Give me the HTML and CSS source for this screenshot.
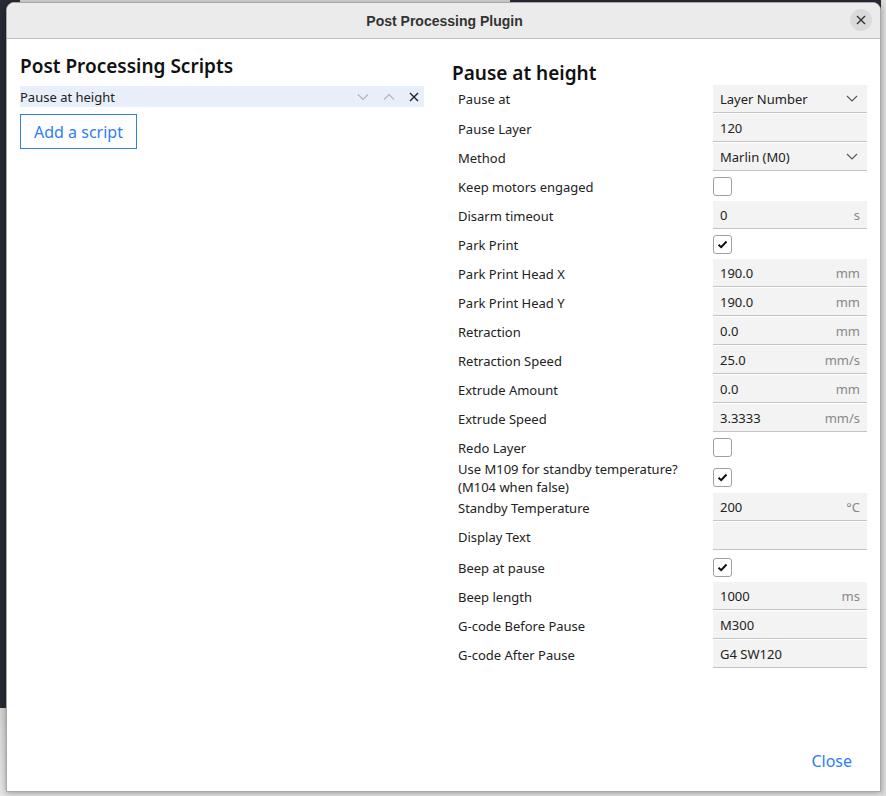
FILE: index.html
```html
<!DOCTYPE html>
<html>
<head>
<meta charset="utf-8">
<link rel="stylesheet" href="styles.css">
</head>
<body>
<div class="backdrop">
  <div class="dialog">
    <div class="titlebar">
      <span class="title">Post Processing Plugin</span>
      <span class="winclose"><svg width="10" height="10" viewBox="0 0 10 10"><path d="M1 1L9 9M9 1L1 9" stroke="#333" stroke-width="1.4" fill="none"/></svg></span>
    </div>
    <div class="content">
      <div class="left">
        <h2 class="heading">Post Processing Scripts</h2>
        <div class="script-item">
          <span class="script-name">Pause at height</span>
          <span class="item-icons">
            <svg class="ic" width="12" height="8" viewBox="0 0 12 8"><path d="M1 1.5L6 6.5L11 1.5" stroke="#b4b4b4" stroke-width="1.1" fill="none"/></svg>
            <svg class="ic" width="12" height="8" viewBox="0 0 12 8"><path d="M1 6.5L6 1.5L11 6.5" stroke="#b4b4b4" stroke-width="1.1" fill="none"/></svg>
            <svg class="ic" width="10" height="10" viewBox="0 0 10 10"><path d="M1 1L9 9M9 1L1 9" stroke="#222" stroke-width="1.4" fill="none"/></svg>
          </span>
        </div>
        <button class="add-btn">Add a script</button>
      </div>
      <div class="right">
        <h2 class="heading sub">Pause at height</h2>
        <div class="settings">
          <div class="row first"><span class="lbl">Pause at</span><div class="box combo"><span>Layer Number</span><svg width="12" height="7" viewBox="0 0 12 7"><path d="M1 1L6 6L11 1" stroke="#555" stroke-width="1.1" fill="none"/></svg></div></div>
          <div class="row"><span class="lbl">Pause Layer</span><div class="box"><span>120</span></div></div>
          <div class="row"><span class="lbl">Method</span><div class="box combo"><span>Marlin (M0)</span><svg width="12" height="7" viewBox="0 0 12 7"><path d="M1 1L6 6L11 1" stroke="#555" stroke-width="1.1" fill="none"/></svg></div></div>
          <div class="row"><span class="lbl">Keep motors engaged</span><div class="cbwrap"><span class="cb"></span></div></div>
          <div class="row"><span class="lbl">Disarm timeout</span><div class="box"><span>0</span><span class="unit">s</span></div></div>
          <div class="row"><span class="lbl">Park Print</span><div class="cbwrap"><span class="cb"><svg width="11" height="9" viewBox="0 0 11 9"><path d="M1.5 4.8L4.2 7.2L9.5 1.5" stroke="#111" stroke-width="2" fill="none"/></svg></span></div></div>
          <div class="row"><span class="lbl">Park Print Head X</span><div class="box"><span>190.0</span><span class="unit">mm</span></div></div>
          <div class="row"><span class="lbl">Park Print Head Y</span><div class="box"><span>190.0</span><span class="unit">mm</span></div></div>
          <div class="row"><span class="lbl">Retraction</span><div class="box"><span>0.0</span><span class="unit">mm</span></div></div>
          <div class="row"><span class="lbl">Retraction Speed</span><div class="box"><span>25.0</span><span class="unit">mm/s</span></div></div>
          <div class="row"><span class="lbl">Extrude Amount</span><div class="box"><span>0.0</span><span class="unit">mm</span></div></div>
          <div class="row"><span class="lbl">Extrude Speed</span><div class="box"><span>3.3333</span><span class="unit">mm/s</span></div></div>
          <div class="row"><span class="lbl">Redo Layer</span><div class="cbwrap"><span class="cb"></span></div></div>
          <div class="row tall"><span class="lbl">Use M109 for standby temperature?<br>(M104 when false)</span><div class="cbwrap"><span class="cb"><svg width="11" height="9" viewBox="0 0 11 9"><path d="M1.5 4.8L4.2 7.2L9.5 1.5" stroke="#111" stroke-width="2" fill="none"/></svg></span></div></div>
          <div class="row"><span class="lbl">Standby Temperature</span><div class="box"><span>200</span><span class="unit">°C</span></div></div>
          <div class="row textrow"><span class="lbl">Display Text</span><div class="box"><span></span></div></div>
          <div class="row"><span class="lbl">Beep at pause</span><div class="cbwrap"><span class="cb"><svg width="11" height="9" viewBox="0 0 11 9"><path d="M1.5 4.8L4.2 7.2L9.5 1.5" stroke="#111" stroke-width="2" fill="none"/></svg></span></div></div>
          <div class="row"><span class="lbl">Beep length</span><div class="box"><span>1000</span><span class="unit">ms</span></div></div>
          <div class="row"><span class="lbl">G-code Before Pause</span><div class="box"><span>M300</span></div></div>
          <div class="row"><span class="lbl">G-code After Pause</span><div class="box"><span>G4 SW120</span></div></div>
        </div>
      </div>
    </div>
    <div class="footer">
      <span class="close-link">Close</span>
    </div>
  </div>
</div>
</body>
</html>
```

FILE: styles.css
```css
* { box-sizing: border-box; }
html, body { margin: 0; padding: 0; }
body {
  width: 886px;
  height: 796px;
  overflow: hidden;
  font-family: "Noto Sans", "DejaVu Sans", sans-serif;
  background:
    linear-gradient(to right, transparent 0, transparent 881px, #dcdcdc 881px),
    linear-gradient(to right, transparent 0, transparent 20px, #d9d9d9 20px, #d9d9d9 510px, transparent 510px) top left / 886px 2px no-repeat,
    linear-gradient(to bottom, #272b33 0, #272b33 708px, #d2d2d2 708px, #e6e6e6 796px);
}
.backdrop {
  padding: 2px 5px 0 6px;
  height: 796px;
}
.dialog {
  width: 875px;
  height: 790px;
  background: #fff;
  border: 1px solid #a8a8a8;
  border-radius: 8px 8px 0 0;
  box-shadow: 0 1px 6px rgba(0,0,0,0.35);
  display: flex;
  flex-direction: column;
  overflow: hidden;
}
.titlebar {
  height: 36px;
  flex: none;
  background: #ebebeb;
  border-bottom: 1px solid #bfbfbf;
  display: flex;
  align-items: center;
  justify-content: center;
  position: relative;
}
.title {
  font-family: "Liberation Sans", sans-serif;
  font-weight: bold;
  font-size: 14px;
  color: #333;
  margin-left: 2px;
}
.winclose {
  position: absolute;
  right: 8px;
  top: 6px;
  width: 22px;
  height: 22px;
  border-radius: 50%;
  background: #dadada;
  display: flex;
  align-items: center;
  justify-content: center;
}
.content {
  flex: 1;
  display: flex;
  padding: 13px 13px 0 13px;
}
.left {
  width: 404px;
  flex: none;
}
.heading {
  margin: 0;
  font-size: 19px;
  font-weight: 600;
  color: #111;
  line-height: 28px;
  height: 28px;
}
.script-item {
  margin-top: 6px;
  height: 21px;
  background: #e8effb;
  display: flex;
  align-items: center;
  justify-content: space-between;
  font-size: 13px;
  color: #222;
}
.item-icons {
  display: flex;
  align-items: center;
  gap: 14px;
  padding-right: 5px;
}
.ic { display: block; }
.add-btn {
  margin-top: 7px;
  width: 117px;
  height: 35px;
  border: 1px solid #2f7cf6;
  background: #fff;
  color: #2f7cf6;
  font-family: "Noto Sans", sans-serif;
  font-size: 16px;
  padding: 0;
}
.right {
  margin-left: 28px;
  flex: 1;
}
.heading.sub {
  margin-top: 9px;
  height: 24px;
  line-height: 25px;
  font-size: 19px;
}
.settings {
  padding-left: 6px;
}
.row {
  height: 29px;
  display: flex;
  align-items: center;
  justify-content: space-between;
  font-size: 13px;
  color: #222;
}
.row.tall {
  height: 31px;
}
.row.textrow {
  height: 31px;
}
.lbl {
  line-height: 18px;
}
.row.first .lbl {
  margin-bottom: 1px;
}
.row.textrow .lbl {
  margin-bottom: 2px;
}
.box {
  width: 154px;
  height: 28px;
  align-self: flex-start;
  background: #f3f3f3;
  border-bottom: 1px solid #c4c4c4;
  display: flex;
  align-items: center;
  justify-content: space-between;
  padding: 0 7px 0 7px;
  color: #222;
}
.unit { color: #888; }
.combo svg { margin-right: 2px; }
.cbwrap {
  width: 154px;
}
.cb {
  width: 19px;
  height: 19px;
  border: 1px solid #a0a0a0;
  border-radius: 3px;
  background: #fff;
  display: flex;
  align-items: center;
  justify-content: center;
}
.footer {
  height: 62px;
  flex: none;
  display: flex;
  justify-content: flex-end;
  padding: 21px 28px 0 0;
}
.close-link {
  color: #2f7cf6;
  font-size: 16px;
  line-height: 22px;
}
```
